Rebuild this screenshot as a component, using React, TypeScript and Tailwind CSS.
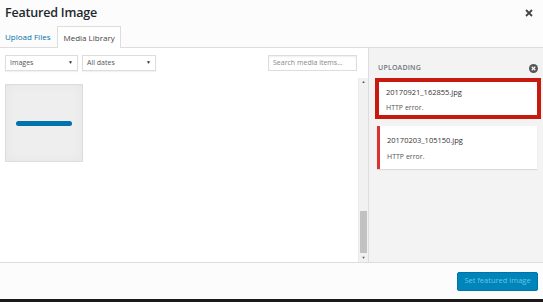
import React from 'react';

const font = { fontFamily: '"Open Sans", "Noto Sans", sans-serif' };

const Select: React.FC<{ label: string; w: string }> = ({ label, w }) => (
  <div className={`${w} h-[16px] border border-[#ddd] bg-white flex items-center justify-between px-[4px] shadow-[0_1px_1px_rgba(0,0,0,0.05)]`}>
    <span className="text-[7px] text-[#555]">{label}</span>
    <span className="text-[5px] text-[#333]">▼</span>
  </div>
);

const UploadCard: React.FC<{ name: string }> = ({ name }) => (
  <div className="bg-white border-l-[3px] border-[#dc3232] shadow-[0_1px_1px_rgba(0,0,0,0.1)] pl-[7px] pt-[9px] pb-[7px]">
    <div className="text-[7.5px] text-[#333] leading-[10px]">{name}</div>
    <div className="text-[7px] text-[#555] leading-[10px] mt-[7px]">HTTP error.</div>
  </div>
);

export default function App() {
  return (
    <div className="w-[543px] h-[302px] flex flex-col bg-[#fcfcfc] overflow-hidden" style={font}>
      <div className="h-[26px] flex items-center justify-between pl-[5px] pr-[10px]">
        <h1 className="text-[12.5px] font-semibold text-[#23282d] tracking-[-0.2px]">Featured Image</h1>
        <svg width="8" height="8" viewBox="0 0 8 8">
          <path d="M1 1 L7 7 M7 1 L1 7" stroke="#444" strokeWidth="1.8" />
        </svg>
      </div>
      <div className="h-[22px] flex items-end border-b border-[#ddd] pl-[5px]">
        <div className="h-[21px] flex items-center text-[8px] text-[#0073aa] pr-[7px]">Upload Files</div>
        <div className="h-[22px] -mb-px flex items-center px-[5px] border border-b-0 border-[#ddd] bg-white text-[8px] text-[#444]">
          Media Library
        </div>
      </div>
      <div className="flex-1 flex min-h-0">
        <div className="flex-1 bg-white flex">
          <div className="flex-1 pt-[7px] pl-[5px] pr-[1px]">
            <div className="flex justify-between">
              <div className="flex gap-[4px]">
                <Select label="Images" w="w-[73px]" />
                <Select label="All dates" w="w-[74px]" />
              </div>
              <div className="w-[89px] h-[16px] border border-[#ddd] bg-white flex items-center px-[4px] shadow-[inset_0_1px_2px_rgba(0,0,0,0.07)]">
                <span className="text-[7px] text-[#888]">Search media items...</span>
              </div>
            </div>
            <div className="mt-[13px] w-[78px] h-[78px] bg-[#eee] border border-[#ddd] flex items-center justify-center shadow-[inset_0_0_12px_rgba(0,0,0,0.04)]">
              <div className="w-[56px] h-[5px] rounded-full bg-[#0073aa]" />
            </div>
          </div>
          <div className="w-[10px] flex flex-col mt-[30px] bg-[#f1f1f1] border-l border-[#eaeaea]">
            <div className="h-[8px] flex items-center justify-center text-[4px] text-[#555]">▲</div>
            <div className="flex-1" />
            <div className="h-[42px] mx-[1px] bg-[#c1c1c1]" />
            <div className="h-[9px] flex items-center justify-center text-[4px] text-[#555]">▼</div>
          </div>
        </div>
        <div className="w-[175px] bg-[#f3f3f3] border-l border-[#ddd] flex flex-col">
          <div className="flex items-center justify-between pl-[9px] pr-[5px] pt-[15px]">
            <span className="text-[7px] font-semibold text-[#72777c] tracking-[0.2px]">UPLOADING</span>
            <svg width="9" height="9" viewBox="0 0 10 10">
              <circle cx="5" cy="5" r="5" fill="#555" />
              <path d="M3 3 L7 7 M7 3 L3 7" stroke="#f3f3f3" strokeWidth="1.4" />
            </svg>
          </div>
          <div className="mt-[4px] ml-[6px] mr-[2px] border-[4px] border-[#c8190f] bg-white pl-[7px] pt-[5px] pb-[2px]">
            <div className="text-[7.5px] text-[#333] leading-[10px]">20170921_162855.jpg</div>
            <div className="text-[7px] text-[#555] leading-[10px] mt-[6px]">HTTP error.</div>
          </div>
          <div className="mt-[7px] ml-[8px] mr-[6px]">
            <UploadCard name="20170203_105150.jpg" />
          </div>
        </div>
      </div>
      <div className="h-[37px] border-t border-[#ddd] flex items-center justify-end pr-[5px]">
        <div className="w-[81px] h-[19px] bg-[#0085ba] border border-[#0073aa] rounded-[2px] flex items-center justify-center text-[7.5px] text-[#66c6e4]">
          Set featured image
        </div>
      </div>
      <div className="h-[3px] bg-[#1a1a1a]" />
    </div>
  );
}
